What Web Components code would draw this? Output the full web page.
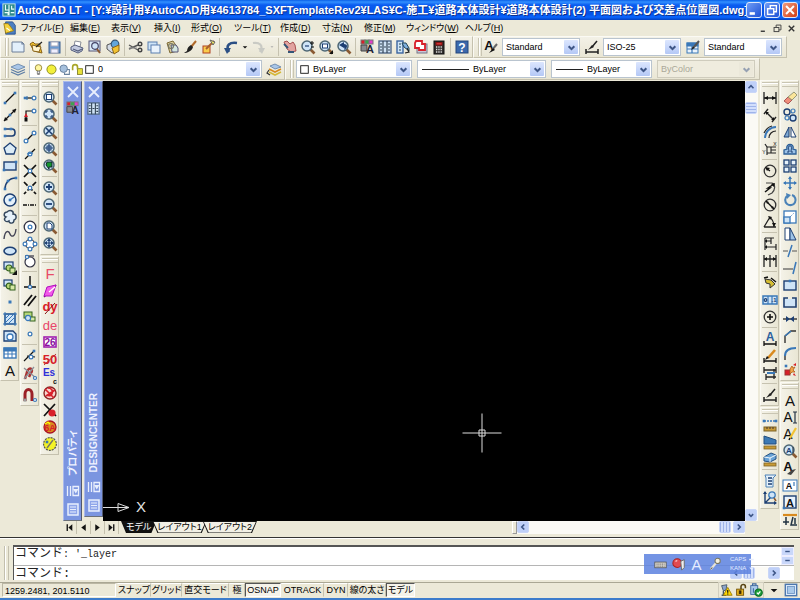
<!DOCTYPE html>
<html lang="ja">
<head>
<meta charset="utf-8">
<title>AutoCAD LT</title>
<style>
html,body{height:100%;margin:0}
body{background:#ece9d8;color:#000;overflow:hidden;
 --ui:"Liberation Sans","Noto Sans CJK JP",sans-serif;font:9px/12px var(--ui)}
</style>
</head>
<body>
<cad-app></cad-app>
<script>
const L=(d,c='#111',w=1.2,x='')=>`<path d="${d}" fill="none" stroke="${c}" stroke-width="${w}" ${x}/>`;
const F=(d,f,s='none',w=1)=>`<path d="${d}" fill="${f}" stroke="${s}" stroke-width="${w}"/>`;
const C=(x,y,r,f='none',s='#111',w=1.2)=>`<circle cx="${x}" cy="${y}" r="${r}" fill="${f}" stroke="${s}" stroke-width="${w}"/>`;
const R=(x,y,w,h,f='none',s='#111',k=1)=>`<rect x="${x}" y="${y}" width="${w}" height="${h}" fill="${f}" stroke="${s}" stroke-width="${k}"/>`;
const T=(t,x,y,s,c='#111',b=400)=>`<text x="${x}" y="${y}" font-size="${s}" font-weight="${b}" fill="${c}" font-family="Liberation Sans, sans-serif" text-anchor="middle">${t}</text>`;
const N='#1d3f73',B='#3a78b8',P='#cfe4f7',G='#8b8f98',Y='#f1c232',O='#d98a1e',RD='#d8202a';
const dot=(x,y)=>R(x-1,y-1,2,2,B,B,.6);
const ring=(x,y,r=1.9)=>C(x,y,r,'#fff',B,1.2);
const mag=i=>L('M10.5 10.5L14.5 14.5','#8a5a33',2.6)+C(7,7,5,P,'#4d6674',1.5)+i;
const ic={
 line:L('M3 13L13 3')+dot(3,13)+dot(13,3),
 xline:L('M2 14L14 2')+F('M2 14L3 10L6 13ZM14 2L13 6L10 3Z','#111')+dot(8,8),
 pline:L('M3 5H10C14 5 14 12 10 12H3',N,1.6)+dot(3,5)+dot(3,12)+dot(9,5),
 poly:F('M8 2L14 7L12 13H4L2 7Z','#dcecf6',N,1.3),
 rect:R(2,4,12,8,P,N,1.4)+dot(2,12)+dot(14,4),
 arc:L('M3 14C3 8 7 3 14 3',N,1.5)+dot(3,14)+dot(6,6)+dot(14,3),
 circle:C(8,8,6,'#e6f1fa',N,1.5)+L('M8 8L12 5',B,1.4)+dot(8,8),
 cloud:F('M5 3C8 0 12 2 11 5C15 5 15 10 12 11C12 15 7 15 7 12C3 14 1 10 4 8C1 7 2 3 5 3Z','#e6f1fa','#33465c',1.4),
 spline:L('M2 13C3 3 7 5 8 8S13 12 14 3','#445',1.4),
 ellipse:`<ellipse cx="8" cy="8" rx="6" ry="3.7" fill="${P}" stroke="${N}" stroke-width="1.6"/>`,
 insert:R(2,2,9,7,P,N,1.2)+C(7,8,3,'#b8d879','#33611e')+R(8,8,5,5,'#d6e9a5','#33611e')+F('M15 10V15H10Z','#111'),
 block:R(2,3,8,6,P,N,1.2)+C(7,9,2.8,'#b8d879','#33611e')+R(8,8,5,5,'#d6e9a5','#33611e'),
 point:R(7,7,2,2,B,B),
 hatch:R(3,3,10,10,P,N,1.4)+L('M3 8L8 3M3 12L12 3M6 13L13 6M1 13H15M3 1V15M13 1V15M1 3H15',B,1),
 region:F('M2 3H11L14 6V13H2Z',P,N,1.3)+C(8,9,3,'#fff',B,1.3),
 table:R(2,3,12,10,'#fff',B,1.4)+R(2,3,12,3,B,B)+L('M2 9H14M6 5V13M10 5V13',B,1),
 A:T('A',8,14,15),
 snap1:L('M2 8H10')+ring(12,8)+dot(3,8)+L('M5 6V10',B),
 snap2:L('M4 13V4H11')+ring(12,4)+F('M2 10H6L4 6Z',RD)+R(3,11,2,3,'#111'),
 snapEnd:L('M4 12L12 4')+ring(12,4)+ring(4,12),
 snapMid:L('M3 13L13 3')+ring(8,8)+L('M5 8L11 7',B),
 snapInt:L('M2 2L14 14M14 2L2 14','#111',1.7)+ring(8,8,1.8),
 snapApp:L('M2 2L14 14M14 2L2 14','#111',1.7,'stroke-dasharray="5 2"')+ring(8,8,1.8),
 snapExt:L('M1 8H15','#111',1.4,'stroke-dasharray="4 1 1 1"'),
 snapCen:C(8,8,5.8,'#fff','#334',1.3)+ring(8,8),
 snapQuad:C(8,8,4.5,'#fff','#334')+ring(8,3)+ring(8,13)+ring(3,8)+ring(13,8),
 snapTan:C(8,9,5,'#fff','#334')+L('M3 3H12','#334')+ring(5,4,1.6),
 snapPerp:L('M8 1V12M2 12H14','#111',1.5)+ring(8,12,1.6),
 snapPar:L('M2 13L10 3M6 14L14 4','#111',1.8),
 snapIns:R(2,3,8,6,'#b8d879','#33611e')+R(8,8,5,4,'#d6e9a5','#33611e')+C(6,9,2.6,P,B),
 snapNode:ring(8,8),
 snapNear:L('M2 13L12 3M5 8L13 9')+ring(9,9)+dot(12,3),
 snapNone:L('M3 14L5 7C7 1 12 4 9 8L7 12','#a33',2.5)+L('M2 3L14 13M2 14L12 2',G,1.3)+ring(13,13,1.5),
 magnet:L('M3 14V7C3 1 10 1 10 7V14','#9b2027',3)+R(2,12,2,2,'#ddd','#888')+ring(13,13,1.5),
 zWin:mag(R(4.5,4.5,5,5,'#fff',N)),zDyn:mag(L('M4 6V4H6M8 4H10V6M10 8V10H8M6 10H4V8',N)),
 zScale:mag(L('M4 4L10 10M10 4L4 10',N,1.6)),zCen:mag(L('M7 3V11M3 7H11',N)+R(5,5,4,4,'none',N)),
 zObj:mag(F('M5 4H10V9H7V11L4 7Z','#15952d','#123')),zIn:mag(L('M7 4V10M4 7H10',N,1.8)),zOut:mag(L('M4 7H10',N,1.8)),
 zAll:mag(F('M5 4H8L10 6V10H5Z','#fff',N)),zExt:mag(F('M7 2L9 5H5ZM7 12L9 9H5ZM2 7L5 5V9ZM12 7L9 5V9Z',N)+L('M7 5V9M5 7H9',N)),
 F:T('F',8,13,15,'#e84a68'),
 g1:L('M2 14L14 2','#606',1.4)+F('M5 4L14 2L10 13L2 13Z','#f25ae8','#b010c0')+L('M7 9L13 4','#fff',1.3),
 dy:T('dy',8,11,13,RD,700)+L('M3 14L13 3','#811',1),
 de:T('de',8,13,13,'#e8456a'),
 g26:R(2,3,12,10,'#fff','#a020b0',1.6)+T('26',8,12,10,'#8a109c',700),
 g50:T('50',8,13,13,RD,700)+L('M2 14L14 3','#b33',1),
 es:T('Es',7,8,10,'#3030d8',700)+T('c',13,16,7,'#111',700),
 g8:C(8,8,6,'#f6d5cf','#8c2323',1.4)+L('M3 4L12 13M4 11L13 5M6 3C13 3 11 13 5 10',RD,1.7),
 g9:L('M2 2L14 14M2 14L13 2','#111',1.7)+C(10,11,3,RD,RD),
 g10:C(8,8,6,O,'#a12',1.3)+T('6A',8,12,9,RD,700)+L('M3 5L6 3L8 5','#ff0',1.3),
 g11:C(8,8,6.4,'#f4f425','#555','1.2" stroke-dasharray="2 1')+L('M5 12L11 4','#776',1.4)+dot(5,6),
 new:F('M2 3H12L14 5V13H2Z','#e3f0fb','#6d7f98')+L('M12 3V5H14','#6d7f98'),
 open:F('M2 5L5 3L7 5H12V7L14 14L6 12Z',Y,'#8a6419')+F('M4 6L13 8L11 13L5 12Z','#fff4cf','#8a6419')+L('M8 8L14 3','#222'),
 save:R(3,3,11,11,'#6b9bd2','#3a5e90')+R(5,3,7,4,'#fff','#aab')+R(5,10,7,4,'#eef','#aab'),
 print:F('M6 2L12 3L11 8L5 7Z','#fff',G)+F('M2 8L6 6L14 9L13 12L9 14L2 11Z','#c4cbe0','#555e7c')+L('M4 10L9 12L13 10','#555e7c'),
 preview:R(2,2,11,10,'#dcebf8','#557')+C(8,7,3.3,P,'#446')+L('M10 10L13 14','#8a5a33',2),
 publish:F('M2 6L7 4L12 8V12L7 14L2 10Z','#d5dbe6','#555')+C(10,5,3.8,'#62a6dc','#357')+F('M7 9L14 6V12L9 15Z',Y,'#8a6419'),
 cut:L('M1 6L10 11M1 10L10 6','#555',1.4)+L('M1 9H9','#999',1)+C(12,5,1.8,'none','#444',1.4)+C(12,11,1.8,'none','#444',1.4),
 copy:R(2,3,9,8,P,'#5a7fb0')+R(5,6,9,8,'#eaf3fc','#5a7fb0'),
 paste:F('M3 4L9 2L13 8V12L6 14Z','#dccf9c','#7d6a35')+F('M7 6H12L14 9V13H8Z','#d3e6e0','#557')+C(7,7,2.5,'none','#776'),
 brush:L('M14 2L9 8','#b06a2a',2)+F('M9 6L11 8C10 12 5 14 2 14L5 12C5 9 7 7 9 6Z','#222'),
 bedit:R(3,7,7,7,'#f9cc4c','#b04020')+L('M6 10L14 2','#a6602b',2)+F('M10 1L15 3L13 6Z','#e8e060','#666'),
 undo:L('M6 13C2 6 7 3 14 4','#2b4f85',2.6)+F('M1 9H8L4 15Z','#2b4f85'),
 redo:L('M10 13C14 6 9 3 3 4','#c9cac4',2.2)+F('M8 9H15L12 15Z','#c9cac4'),
 drop:F('M5 7H11L8 10Z','#111'),dropg:F('M6 7H10L8 9Z','#aaa'),
 pan:F('M2 3L5 2L8 5L11 3L13 6L14 12L9 13L5 10Z','#e2a3a0','#a65050')+L('M2 5L6 9M6 13H12','#357',1.8),
 zrt:mag(L('M5 7H9',N)+L('M12 2V6M10 4H14M11 8H14','#111',1)),
 zw:mag(R(4.5,5,5,4,'#fff',N))+F('M15 11V15H11Z','#111'),
 zprev:mag(F('M3 6L8 3V5C12 5 12 9 8 11C9 8 8 8 8 9Z',N)),
 props:R(2,1,4,4,RD,'#777')+R(6,1,4,4,'#38a84c','#777')+R(10,1,4,4,'#e43ccc','#777')+F('M2 6H8V12H2Z','#86888e','#444')+T('A',11,14,11,'#223',700),
 dc:R(2,2,12,12,'#cfe2f4','#526a8a',1.4)+L('M6 2V14M10 2V14M3 5H5M3 8H5M3 11H5M11 5H13M11 8H13M11 11H13M7 8H9','#345',1.2),
 tp:R(2,2,6,12,P,'#3b65a0',1.4)+F('M7 4H11L14 9V12L9 8Z','#7fb0e0','#245')+L('M4 5H6M4 8H6M4 11H6','#245')+L('M12 9L14 13L10 14','#222'),
 markup:R(4,5,10,9,'#c8c7d6','#778')+F('M3 2H9V5H12V11H6V9H2V4Z','#fff',RD,1.8),
 calc:R(3,2,10,13,'#33302e','#111')+R(5,3.5,6,2.5,'#c33','#811')+L('M5 8H11M5 10.5H11M5 13H11','#ddd',1.3,'stroke-dasharray="1.3 1"'),
 help:R(2,2,12,12,'#3b68ac','#24467c')+T('?',8,12.5,12,'#fff',700),
 tstyle:T('A',6,11,13,'#111',700)+L('M14 5L9 11','#666',2)+F('M10 9L12 11L6 14Z','#111'),
 dstyle:L('M2 13H14M2 10V15M14 10V15M13 2L8 8','#222',1.5)+F('M8 6L10 8L4 11Z','#222'),
 tbstyle:R(2,4,11,10,'#eaf3fc',B)+R(2,4,11,3,B,B)+L('M2 10H13M7 5V14',B)+L('M14 2L9 8','#555',2)+F('M8 7L10 9L6 11Z','#222'),
 layers:F('M1 6L8 3L15 6L8 9Z','#a9c6e8','#5f7fa5',.8)+L('M1 8.5L8 11.5L15 8.5M1 11L8 14L15 11','#5f7fa5',1.2),
 lprev:F('M4 5L9 3L15 6L9 8Z','#a9c6e8','#5f7fa5',.8)+L('M3 8L9 11L15 8',O,1.6)+L('M3 11L9 14L15 11','#d4b93a',1.6)+L('M3 9L1 12L4 14','#333'),
 bulb:C(8,6,4,'#fff7a0','#998b40')+R(6.5,10,3,3,'#eee','#777')+L('M6.5 14H9.5','#777'),
 sun:C(8,8,5.6,'#f2ef3a','#8e8c20'),sunvp:C(7,7,4.6,'#a6c0dd','#6a839f')+L('M11 8H14V14H8V12','#6a839f',1.3),
 lock:R(8,7,6,7,'#e8e23a','#79761c')+L('M2 9V5C2 1 8 1 8 5V8','#a9a62a',2),
 white:R(2.5,2.5,11,11,'#fff','#111',1.3),
 dLin:L('M2 2V14M14 2V14M2 8H14','#222',1.3)+F('M2 8L6 6V10ZM14 8L10 6V10Z','#111'),
 dAli:L('M4 5L12 13M2 7L6 2M10 15L14 10','#222',1.4)+F('M4 5H7L4 8ZM12 13H9L12 10Z','#111'),
 dArc:L('M3 14C3 8 8 3 14 3',B,1.8)+L('M2 9C4 5 6 3 10 2M7 14C7 10 10 7 14 7','#222'),
 dOrd:L('M5 6V14M5 6H14M9 6V12M5 12H14M9 9H14','#222',1.1)+T('X',13,5,5)+T('Y',2,13,5)+L('M3 3L5 6','#222'),
 dRad:C(8,8,5.8,'none','#333',1.3)+L('M8 8L4 5','#111',1.3)+F('M3 4L8 5L5 8Z','#111'),
 dJog:L('M4 3H10C14 5 13 10 10 13L6 15','#444')+L('M3 12L8 8L6 8L12 4','#111',1.5)+F('M13 3L12 7L9 4Z','#111'),
 dDia:C(8,8,5.8,'none','#333',1.3)+L('M4 4L12 12','#111',1.3)+F('M4 4L7 5L5 7ZM12 12L9 11L11 9Z','#111'),
 dAng:L('M2 13H14M2 13L8 3M7 3C11 5 12 8 12 13','#222',1.3)+F('M6 2L10 3L8 6ZM10 9H14L12 13Z','#111'),
 dBas:L('M3 2V14M9 2V8M14 8V14M3 5H9M3 11H14M3 2H12','#222',1.2)+F('M3 5L5 3V7ZM3 11L5 9V13Z','#111'),
 dCon:L('M2 2V14M8 2V14M14 2V14M2 6H14','#222',1.3)+F('M2 6L5 4V8ZM14 6L11 4V8Z','#111'),
 qdim:F('M3 4L9 5L13 9L8 13L8 9L4 8Z','#d5bd32','#333')+L('M2 3L6 2M9 3L14 7','#111',1.5),
 tol:R(1,4,14,8,P,B,1.5)+L('M6 4V12M10 4V12',B)+C(3.5,8,1.3,'none',N)+T('.1',12,10,6,N,700),
 cmark:C(8,8,5.8,'none','#333',1.3)+L('M8 5V11M5 8H11','#111',1.6),
 dEdit:T('A',8,10,12,'#2b609e',700)+L('M2 13H14M2 10V15M14 10V15','#111',1.3),
 dTed:L('M13 2L6 10',O,2.6)+F('M5 8L7 10L3 12Z','#111')+L('M2 13H14M2 10V15M14 10V15','#111',1.3),
 dUpd:L('M2 5H14M2 2V8M14 2V8M4 12H14M4 9V15M12 4V14','#222',1.3)+L('M5 8H13',B,2),
 erase:F('M2 11L6 7L10 10L6 14Z','#f08d7a','#a55')+F('M6 7L12 2L15 5L10 10Z','#fbe59a','#997'),
 cpy:C(5,5,3,'none',N,1.4)+C(11,11,3,P,N,1.4)+C(11,4,2,'none',B)+C(5,11,2,'none',B),
 mirror:F('M7 3V13H2Z','#7fa9d3',N)+F('M9 3V13H14Z','#fff',N),
 offset:F('M2 13V9L5 8C3 2 13 2 11 8L14 9V13Z','#9dc3e8','#2d5f96',1.3)+L('M5 11H7C7 8 5 5 8 5S9 8 9 11H11',N,1),
 array:R(2,2,5,5,'#e6f1fa',N,1.3)+R(9,2,5,5,'#e6f1fa',N,1.3)+R(2,9,5,5,'#e6f1fa',N,1.3)+R(9,9,5,5,'#e6f1fa',N,1.3),
 move:L('M8 2V14M2 8H14',B,1.5)+F('M8 1L10 4H6ZM8 15L10 12H6ZM1 8L4 6V10ZM15 8L12 6V10Z',B),
 rotate:L('M5 4A5.2 5.2 0 1 0 10 3','#4a82b8',2.1)+F('M4 1L9 3L5 7Z','#4a82b8'),
 scale:R(2,2,12,12,'#fff',B,1.3)+R(2,8,6,6,P,B,1.3)+L('M8 8L12 4',B,1,'stroke-dasharray="1 1"'),
 stretch:F('M3 2H8V14H3Z','#fff',N)+F('M8 2L14 14H8Z','#9fc4e8',N),
 trim:L('M1 8H6M10 8H15','#555')+L('M10 2L6 14',B,1.5),
 extend:L('M1 9H11','#555')+L('M14 2L11 14',B,1.5),
 brkpt:R(2,4,12,9,P,N,1.4)+dot(8,4),
 brk:L('M6 4H2V13H14V4H10',N,1.6)+F('M3 5H13V12H3Z',P),
 join:L('M1 8H15','#222',1.3)+F('M8 8L4 5V11ZM8 8L12 5V11Z',N),
 chamfer:L('M3 15V8L9 3H14','#333',1.4)+L('M3 8L9 3',B,1.6),
 fillet:L('M3 15V10','#333',1.4)+L('M3 11C3 5 8 3 14 3',B,2),
 explode:R(3,8,5,5,RD,'#933')+F('M8 7L10 4L11 6L13 5L11 8L13 10L10 10L8 12Z','#f0a64a','#b05b1b',.8)+F('M11 3L14 1L14 4ZM12 11L14 14L11 13Z',RD)+dot(4,4),
 Aed:T('A',6,13,14)+L('M11 3H15M13 3V14M11 14H15','#234',1.2),
 Apen:T('A',6,13,14)+L('M14 2L8 12',Y,2.2)+L('M8 12L7 14','#111',1.5),
 Afind:mag(T('A',7,10,8,N,700)+L('M11 4V10','#345')),
 Abr:T('A',6,11,13,'#111',700)+F('M14 9L9 15L5 14L10 10Z','#444'),
 Abox:R(1,3,14,11,'#fff',B)+T('A',7,12,9,'#111',700)+L('M12 5V9',B),
 Abox2:R(2,2,12,12,'#eaf3fc',N,1.4)+T('A',8,12.5,11,'#111',700)+dot(2,14),
 Aspc:L('M1 4H15',O,2.2)+L('M4 6V14M1 11H7M11 6L9 14H15M13 7V13','#234',1.5),
 dist:L('M2 4H14',B,1.6,'stroke-dasharray="2 1"')+dot(2,4)+dot(14,4)+R(2,10,12,4,'#c79a35','#7d6326')+L('M5 10V12M8 10V12M11 10V12','#543'),
 area:F('M2 2L14 6V10H2Z','#3c79b4','#234f80')+R(2,12,12,3,'#c79a35','#7d6326',.8),
 mass:F('M2 6L9 2L14 4V8L8 11L2 10Z','#68a2d6','#234f80')+L('M2 6L8 7V11M8 7L14 4','#fff',.9)+R(2,12,12,3,'#c79a35','#7d6326',.8),
 list:F('M3 2H14L11 5V14H4V5Z','#e6f1fa','#4e83b8')+L('M6 5H10M6 8H10M6 11H10',N,1.4),
 idpt:L('M3 2V13H14M3 13L9 7',N,1.4)+C(10,5,3.2,P,B,1.3)+L('M12 8L14 11','#8a5a33',1.6)+F('M1 4L3 1L5 4ZM12 11L15 13L12 15Z',N),
 x:L('M3 3L13 13M13 3L3 13','#e9effd',1.8),
 autohide:L('M2.5 3V13M5.5 3V13','#e9effd',1.3)+L('M8 3.5H13.5V12.5H8Z','#e9effd',1.3)+F('M8 6H13.5L10.75 10.5Z','#e9effd'),
 pmenu:R(3,3,10,11,'#8fa6ea','#e9effd',1.5)+L('M5 6H11M5 8.5H11M5 11H11','#e9effd',1.1),
 chev:L('M4.5 6.5L8 10L11.5 6.5','#3e5687',2.6),
 chevU:L('M4 10L8 6L12 10','#3e5687',2.6),chevL:L('M10 4L6 8L10 12','#3e5687',2.6),chevR:L('M6 4L10 8L6 12','#3e5687',2.6),
 dash:L('M4 8H12','#3e5687',2.5),dashw:L('M4 8H12','#e6edff',2.5),dropw:F('M4 6H12L8 11Z','#e6edff'),
 first:L('M4 2V14','#111',2.4)+F('M13 2V14L6 8Z','#111'),prev:F('M12 2V14L4 8Z','#111'),
 next:F('M4 2V14L12 8Z','#111'),last:F('M3 2V14L10 8Z','#111')+L('M12 2V14','#111',2.4),
 min:L('M3 12H9','#fff',3),rest:L('M6 6V3H13V10H10','#fff',1.6)+R(3,6.5,7,6.5,'none','#fff',1.6),cls:L('M3.5 3.5L12.5 12.5M12.5 3.5L3.5 12.5','#fff',2.3),
 mmin:L('M4 12H10','#333',2),mrest:L('M6 6V3H13V10H10','#444',1.4)+R(3,6.5,7,6,'none','#444',1.4),mcls:L('M4 4L12 12M12 4L4 12','#333',2),
 app:R(1,1,14,14,'#2e8a8e','#d5efe9')+L('M4 2V8H8M11 3V7H14M3 11H7V14M10 11H14M8 2V14','#e9fff9',1.3),
 doc:F('M3 1H11L14 5V15H3Z','#4c7fc1','#264f8d')+F('M1 3H6L12 11L3 14Z','#f5d23c','#9a7a12')+L('M4 8L8 11','#fff'),
 kbd:R(1,5,14,7,'#ddd9cf','#555')+L('M3 7.5H13M3 10H13','#666',1.2,'stroke-dasharray="1.5 .8"'),
 ime:C(6,7,5,'#e24a52','#a22')+F('M10 5L14 3V12L11 15Z','#eee','#666')+L('M4 5L6 4','#fcc',1.4),
 lamp:L('M3 14L10 6','#e9e4d6',2.4)+C(11,4.5,3,'#f6f0df','#776')+L('M3 14L5 12','#555'),
 dish:F('M3 3L9 2L8 8L5 9Z','#8ea6cd','#456')+L('M3 14H8M5 9V14','#456',1.5)+F('M10 5L15 14H5Z','#ffd800','#9c7a00')+L('M10 8V11M10 12V13','#111',1.4),
 unlock:R(3,7,8,7,'#e9b41c','#6e4f08')+L('M8 7V4C8 1 13 1 13 4V6','#574313',1.8)+R(6,9,2,3,'#3a2b06','#3a2b06'),
 xref:R(2,3,8,10,'#a9c9ea','#3b66a0')+L('M4 3V1H8V3M5 6V11','#3b66a0')+C(11,11,4.2,'#1da03a','#0c6b22')+L('M9 11L10.5 12.5L13 9.5','#fff',1.5),
 clean:R(1.5,1.5,13,13,'#dcebfa','#4c77ae',1.6)+R(4,4,8,8,'#a9c9ea','#6f96c4')
};
const icon=(n,s=16)=>`<svg width="${s}" height="${s}" viewBox="0 0 16 16" aria-hidden="true">${ic[n]||''}</svg>`;
const BASE=`*{box-sizing:border-box}button{font:inherit;color:inherit;background:none;border:0;padding:0;margin:0;display:flex;align-items:center;justify-content:center;flex:none}svg{display:block;flex:none}`;
const def=(n,css,html)=>customElements.define(n,class extends HTMLElement{
 connectedCallback(){ if(this.shadowRoot)return;
  const t=document.createElement('template');
  t.innerHTML=`<style>${BASE}${css}</style>`+(typeof html==='function'?html(this):html);
  this.attachShadow({mode:'open'}).append(t.content.cloneNode(true));}
});
const btns=s=>s.trim().split(/\s+/).filter(Boolean).map(n=>n==='|'?'<i class="sep"></i>':`<button type="button" aria-label="${n}">${icon(n)}</button>`).join('');

def('cad-titlebar',`:host{display:flex;align-items:center;height:20px;padding:0 2px;
 background:linear-gradient(#0a5fe8,#3290ff 2px,#0a5cf0 5px,#0552e6 14px,#0a66ff 17px,#0340c0);color:#fff}
 h1{flex:1;min-width:0;margin:0 0 0 1px;font-size:11px;line-height:20px;font-weight:700;white-space:nowrap;overflow:hidden;text-shadow:1px 1px #0a2f8c;font-feature-settings:"palt"}
 .w{display:flex;gap:2px}
 button{width:16px;height:16px;border:1px solid #dfe8fb;border-radius:3px;background:linear-gradient(135deg,#6f9cf5,#1f52d6)}
 .c{background:linear-gradient(135deg,#f09a7c,#d23c14)}`,
 `${icon('app',14)}<h1><slot></slot></h1><div class="w"><button type="button" aria-label="最小化">${icon('min',14)}</button><button type="button" aria-label="元に戻す">${icon('rest',14)}</button><button class="c" type="button" aria-label="閉じる">${icon('cls',14)}</button></div>`);

def('cad-menubar',`:host{display:flex;align-items:center;height:16px;padding:0 2px 0 3px;background:#ece9d8}
 nav{display:grid;grid-template-columns:49px 41px 43px 37px 43px 46px 42px 42px 42px 59px 48px;flex:1;margin-left:4px;font-feature-settings:"palt"}
 nav button{justify-content:flex-start;white-space:nowrap;line-height:14px}
 .w{display:flex}.w button{width:14px}`,
 `${icon('doc',14)}<nav aria-label="メニュー">${[['ファイル','F'],['編集','E'],['表示','V'],['挿入','I'],['形式','O'],['ツール','T'],['作成','D'],['寸法','N'],['修正','M'],['ウィンドウ','W'],['ヘルプ','H']].map(([a,b])=>`<button type="button">${a}(<u>${b}</u>)</button>`).join('')}</nav>
 <div class="w"><button type="button" aria-label="最小化">${icon('mmin',11)}</button><button type="button" aria-label="元に戻す">${icon('mrest',11)}</button><button type="button" aria-label="閉じる">${icon('mcls',11)}</button></div>`);

def('cad-toolbar',`:host{display:flex;align-items:center;height:22px;padding:0 1px 0 4px;border:1px solid;border-color:#fbfaf4 #c5c1ae #c5c1ae #fbfaf4;background:linear-gradient(#f3f1e7,#e9e6d4)}
 .g{width:4px;height:18px;border:solid #c9c5b2;border-width:0 1px;box-shadow:inset 1px 0 #fff;flex:none}
 button{width:18px;height:20px}.sep{width:1px;height:18px;background:#c6c2b0;margin:0 2px;flex:none}
 button[aria-label^=drop]{width:9px}button[aria-label^=drop] svg{width:12px}
 :host([vertical]){flex-direction:column;width:100%;height:auto;padding:1px 0 2px;background:linear-gradient(90deg,#f4f2e8,#e9e6d4)}
 :host([vertical]) .g{width:16px;height:5px;border-width:1px 0;box-shadow:inset 0 1px #fff;margin:0 0 2px}
 :host([vertical]) button{width:18px;height:17px}
 :host([vertical]) .sep{width:15px;height:1px;margin:2px 0}`,
 e=>`<i class="g"></i>${btns(e.getAttribute('items')||'')}<slot></slot>`);

def('cad-button',`:host{display:block;flex:none}button{width:18px;height:20px}`,
 e=>`<button type="button" aria-label="${e.getAttribute('label')}">${icon(e.getAttribute('ic'))}</button>`);

def('cad-combo',`:host{display:flex;align-items:center;height:18px;border:1px solid #b9c4cf;background:#fff;flex:none;margin:0 3px 0 2px}
 select{appearance:none;flex:1;min-width:0;height:16px;border:0;outline:0;padding:0 16px 0 3px;background:none;font:9px/16px var(--ui);color:#000}
 .a{margin-left:-14px;width:14px;height:14px;background:linear-gradient(#dce6fe,#b4c8f6);border-radius:1px;pointer-events:none;display:grid;place-items:center;margin-right:1px}
 svg:first-of-type{margin-left:2px}.a svg{margin:0!important}
 .ln{height:1px;background:#222;flex:none;margin:0 1px 0 4px}
 :host([off]){background:#efecde;border-color:#cfccbd}:host([off]) .a{background:#e9e6d8;opacity:.5}:host([off]) select{color:#aaa899;opacity:1}`,
 e=>`${(e.getAttribute('pre')||'').split(' ').filter(Boolean).map(n=>icon(n,n==='white'?11:13)).join('')}${e.hasAttribute('line')?`<i class="ln" style="width:${e.getAttribute('line')}px"></i>`:''}<select aria-label="${e.getAttribute('label')}" ${e.hasAttribute('off')?'disabled':''}><option>${e.getAttribute('value')}</option></select><span class="a">${icon('chev',13)}</span>`);

def('cad-palette',`:host{display:flex;flex-direction:column;align-items:center;width:19px;padding:2px 0;background:#7b95e0;border:1px solid;border-color:#a9b9ec #52596f #6b7078 #a9b9ec;color:#eef2ff}
 button{width:17px;height:16px}h2{margin:auto 0 6px;font-size:10px;line-height:16px;font-weight:700;writing-mode:vertical-rl;text-orientation:sideways;transform:rotate(180deg);white-space:nowrap;font-feature-settings:"palt"}
 button.m{height:18px}`,
 e=>`<button type="button" aria-label="閉じる">${icon('x')}</button><button type="button" aria-label="${e.getAttribute('ic')}">${icon(e.getAttribute('ic'),15)}</button><h2><slot></slot></h2><button class="m" type="button" aria-label="自動的に隠す">${icon('autohide')}</button><button class="m" type="button" aria-label="プロパティ">${icon('pmenu')}</button>`);

def('cad-canvas',`:host{display:block;position:relative;flex:1;min-width:0;background:#000;overflow:hidden}
 .ucs{position:absolute;left:0;bottom:6px;display:flex;align-items:center;color:#e4e4e4;font-size:15px;line-height:16px;gap:6px}
 .cur{position:absolute;left:59%;top:80%;translate:-50% -50%}`,
 `<div class="ucs"><svg width="27" height="12" viewBox="0 0 27 12"><path d="M0 6.5H26M15 2.5L26 6.5L15 10.5Z" fill="none" stroke="#ddd"/></svg><span>X</span></div>
 <svg class="cur" width="41" height="41" viewBox="0 0 41 41"><path d="M20.5 1V40M1 20.5H40M17.5 17.5H23.5V23.5H17.5Z" fill="none" stroke="#ddd"/></svg>`);

def('cad-scroll',`:host{display:flex;background:#fbfaf5;flex:none}
 :host([v]){flex-direction:column;width:13px}:host(:not([v])){height:13px}
 button,i{width:12px;height:12px;border:1px solid #c9d6f8;border-radius:2px;background:#bfd0f8;display:grid;place-items:center}
 i{background:repeating-linear-gradient(#9fb4ea 0 1px,#d3dffc 1px 3px)}
 :host([v]) i{margin-top:9px}:host([v]) button.e{margin-top:auto}
 :host(:not([v])) i{margin-left:auto;margin-right:2px;background:repeating-linear-gradient(90deg,#9fb4ea 0 1px,#d3dffc 1px 3px)}
 :host([near]) i{margin-left:1px}:host([near]) button.e{margin-left:auto}`,
 e=>{const v=e.hasAttribute('v');return `<button type="button" aria-label="前へ">${icon(v?'chevU':'chevL',10)}</button><i></i><button class="e" type="button" aria-label="次へ">${icon(v?'chev':'chevR',10)}</button>`});

def('cad-tabs',`:host{display:flex;height:13px;align-items:stretch;background:#ece9d8}
 .n{display:flex}.n button{width:14px;border-right:1px solid #c5c1ae}
 ul{display:flex;margin:0 0 0 2px;padding:0;list-style:none;flex:1}
 button.t{height:12px;padding:0 1px;line-height:12px;background:#111;clip-path:polygon(0 0,100% 0,calc(100% - 5px) 100%,5px 100%);font-feature-settings:"palt"}
 button.t span{padding:0 4px;height:11px;line-height:11px;background:#f2f0e6;clip-path:polygon(0 0,100% 0,calc(100% - 5px) 100%,5px 100%)}
 button.t[aria-selected=true] span{background:#111;color:#fff}
 li+li{margin-left:-4px}
 cad-scroll{width:228px;margin-right:13px}.sp{width:5px;border:1px solid;border-color:#fff #999 #999 #fff}`,
 `<div class="n">${['first','prev','next','last'].map(n=>`<button type="button" aria-label="${n}">${icon(n,9)}</button>`).join('')}</div>
 <ul role="tablist">${['モデル','レイアウト1','レイアウト2'].map((t,i)=>`<li><button class="t" role="tab" type="button" aria-selected="${!i}"><span>${t}</span></button></li>`).join('')}</ul><i class="sp"></i><cad-scroll></cad-scroll>`);

def('cad-command',`:host{display:flex;position:relative;padding:7px 6px 2px 4px;gap:4px;border-top:1px solid #333;box-shadow:inset 0 1px #fff;background:#ece9d8}
 .g{width:5px;margin-top:1px;border:solid #c3bfad;border-width:0 1px;box-shadow:inset 1px 0 #fff}
 .b{flex:1;display:grid;grid-template-columns:1fr 13px;border:solid #555;border-width:2px 0 0 1px;background:#fff;color:#222}
 .h{height:19px;padding:0 1px;border-bottom:1px solid #b5b5b5;font:10px/15px "Liberation Mono","Noto Sans CJK JP",monospace;white-space:pre}.h span,label{font-size:12px}
 .v{display:grid;grid-template-rows:9px 9px;border-bottom:1px solid #b5b5b5}.v button{background:#c9d7fa;border:1px solid #eef}
 .i{grid-column:1/-1;display:flex;align-items:flex-end;height:14px;padding-left:1px}
 input{flex:1;min-width:0;border:0;outline:0;background:none;height:13px;font:10px/13px "Liberation Mono",monospace}
 label{line-height:11px;font-family:"Liberation Mono","Noto Sans CJK JP",monospace}
 cad-scroll{width:50px;margin-right:14px}
 .ime{position:absolute;right:49px;top:16px;width:107px;height:20px;background:#5f84e0dd;display:flex;align-items:center;padding:0 4px 0 8px;gap:1px;color:#e6edff;font-size:6px;line-height:9px}
 .ime button{width:17px}.ime .k{margin-left:6px;display:grid}.ime b{font-size:15px;font-weight:400}
 .ime .d{margin-left:auto;width:9px;display:grid}`,
 `<i class="g"></i><div class="b"><div class="h"><span>コマンド</span>: '_layer</div><div class="v"><button type="button" aria-label="上へ">${icon('dash',9)}</button><button type="button" aria-label="下へ">${icon('dash',9)}</button></div>
 <div class="i"><label for="c">コマンド:</label><input id="c"><cad-scroll near></cad-scroll></div></div>
 <div class="ime"><button type="button" aria-label="キーボード">${icon('kbd',13)}</button><button type="button" aria-label="IME">${icon('ime',14)}</button><button type="button"><b>A</b></button><button type="button" aria-label="ツール">${icon('lamp',14)}</button><span class="k"><span>CAPS</span><span>KANA</span></span><span class="d">${icon('dashw',9)}${icon('dropw',9)}</span></div>`);

def('cad-status',`:host{display:flex;align-items:center;height:18px;padding:0 2px 2px;border-top:1px solid #aaa794;border-bottom:2px solid #3c7ccc;background:#ece9d8}
 output{width:114px;height:14px;padding-left:2px;line-height:14px;border:1px solid;border-color:#bbb7a4 #fff #fff #bbb7a4}
 .b{display:grid;grid-template-columns:34px 31px 47px 16px 36px 43px 24px 38px 29px;flex:1;margin-left:1px;font-feature-settings:"palt"}
 .b button{height:14px;line-height:12px;white-space:nowrap;border:1px solid;border-color:#fff #c5c1ae #ece9d8 #ece9d8}
 .b button[aria-pressed=true]{border-color:#555 #fff #fff #555;background:#f5f3ea}
 .r{display:flex;gap:1px;align-items:center}.s{display:flex;gap:1px;border:1px solid #d2cfbf}`,
 `<output>1259.2481, 201.5110</output><div class="b">${['スナップ','グリッド','直交モード','極','OSNAP','OTRACK','DYN','線の太さ','モデル'].map((t,i)=>`<button type="button" aria-pressed="${i==4||i==8}">${t}</button>`).join('')}</div>
 <div class="r"><span class="s">${['dish','unlock','xref'].map(n=>`<button type="button" aria-label="${n}">${icon(n,14)}</button>`).join('')}</span><button type="button" aria-label="メニュー">${icon('drop',18)}</button><button type="button" aria-label="フルスクリーン">${icon('clean',14)}</button></div>`);

def('cad-app',`:host{display:flex;flex-direction:column;height:100vh}
 .row{display:flex;align-items:center}.row cad-toolbar{flex:none}
 .main{display:flex;flex:1;min-height:0;align-items:stretch;padding-bottom:3px}
 .col{flex:none;width:20px;display:flex;flex-direction:column;gap:1px;padding-right:1px}
 .r1{padding-left:1px;width:21px}
 .mid{flex:1;min-width:0;display:flex;flex-direction:column;margin:1px 1px 0 3px}
 .view{flex:1;min-height:0;display:flex}
 .view cad-palette+cad-palette{margin:0 0 4px 2px}
 .c3{width:116px}.c4{width:129px}.c5{width:101px}.c6{width:98px}
 .layer{width:233px}.st{width:78px}`,
 `<cad-titlebar>AutoCAD LT - [Y:¥設計用¥AutoCAD用¥4613784_SXFTemplateRev2¥LAS¥C-施工¥道路本体設計¥道路本体設計(2) 平面図および交差点位置図.dwg]</cad-titlebar>
 <cad-menubar></cad-menubar>
 <div class="row"><cad-toolbar items="new open save | print preview publish | cut copy paste brush bedit | undo drop redo dropg | pan zrt zw zprev | props dc tp markup calc | help"></cad-toolbar>
 <cad-toolbar items="tstyle"><cad-combo class="st" label="文字スタイル" value="Standard"></cad-combo><cad-button ic="dstyle" label="寸法スタイル管理"></cad-button><cad-combo class="st" label="寸法スタイル" value="ISO-25"></cad-combo><cad-button ic="tbstyle" label="表スタイル管理"></cad-button><cad-combo class="st" label="表スタイル" value="Standard"></cad-combo></cad-toolbar></div>
 <div class="row"><cad-toolbar items="layers"><cad-combo class="layer" label="画層" pre="bulb sun sunvp lock white" value="0"></cad-combo><cad-button ic="lprev" label="直前の画層"></cad-button></cad-toolbar>
 <cad-toolbar><cad-combo class="c3" label="色" pre="white" value="ByLayer"></cad-combo><cad-combo class="c4" label="線種" line="47" value="ByLayer"></cad-combo><cad-combo class="c5" label="線の太さ" line="27" value="ByLayer"></cad-combo><cad-combo class="c6" off label="印刷スタイル" value="ByColor"></cad-combo></cad-toolbar></div>
 <div class="main">
 <div class="col"><cad-toolbar vertical items="line xline pline poly rect arc circle cloud spline ellipse insert block point hatch region table A"></cad-toolbar></div>
 <div class="col"><cad-toolbar vertical items="snap1 snap2 | snapEnd snapMid snapInt snapApp snapExt | snapCen snapQuad snapTan | snapPerp snapPar snapIns snapNode | snapNear snapNone | magnet"></cad-toolbar></div>
 <div class="col"><cad-toolbar vertical items="zWin zDyn zScale zCen zObj | zIn zOut | zAll zExt"></cad-toolbar><cad-toolbar vertical items="F g1 dy de g26 g50 es g8 g9 g10 g11"></cad-toolbar></div>
 <div class="mid"><div class="view"><cad-palette ic="props">プロパティ</cad-palette><cad-palette ic="dc">DESIGNCENTER</cad-palette><cad-canvas></cad-canvas><cad-scroll v></cad-scroll></div><cad-tabs></cad-tabs></div>
 <div class="col r1"><cad-toolbar vertical items="dLin dAli dArc dOrd | dRad dJog dDia dAng | dBas dCon | qdim tol cmark | dEdit dTed dUpd | dstyle"></cad-toolbar><cad-toolbar vertical items="dist area mass | list idpt"></cad-toolbar></div>
 <div class="col"><cad-toolbar vertical items="erase cpy mirror offset array move rotate scale stretch trim extend brkpt brk join chamfer fillet explode"></cad-toolbar><cad-toolbar vertical items="A Aed Apen Afind Abr Abox Abox2 Aspc"></cad-toolbar></div>
 </div>
 <cad-command></cad-command><cad-status></cad-status>`);
</script>
</body>
</html>
